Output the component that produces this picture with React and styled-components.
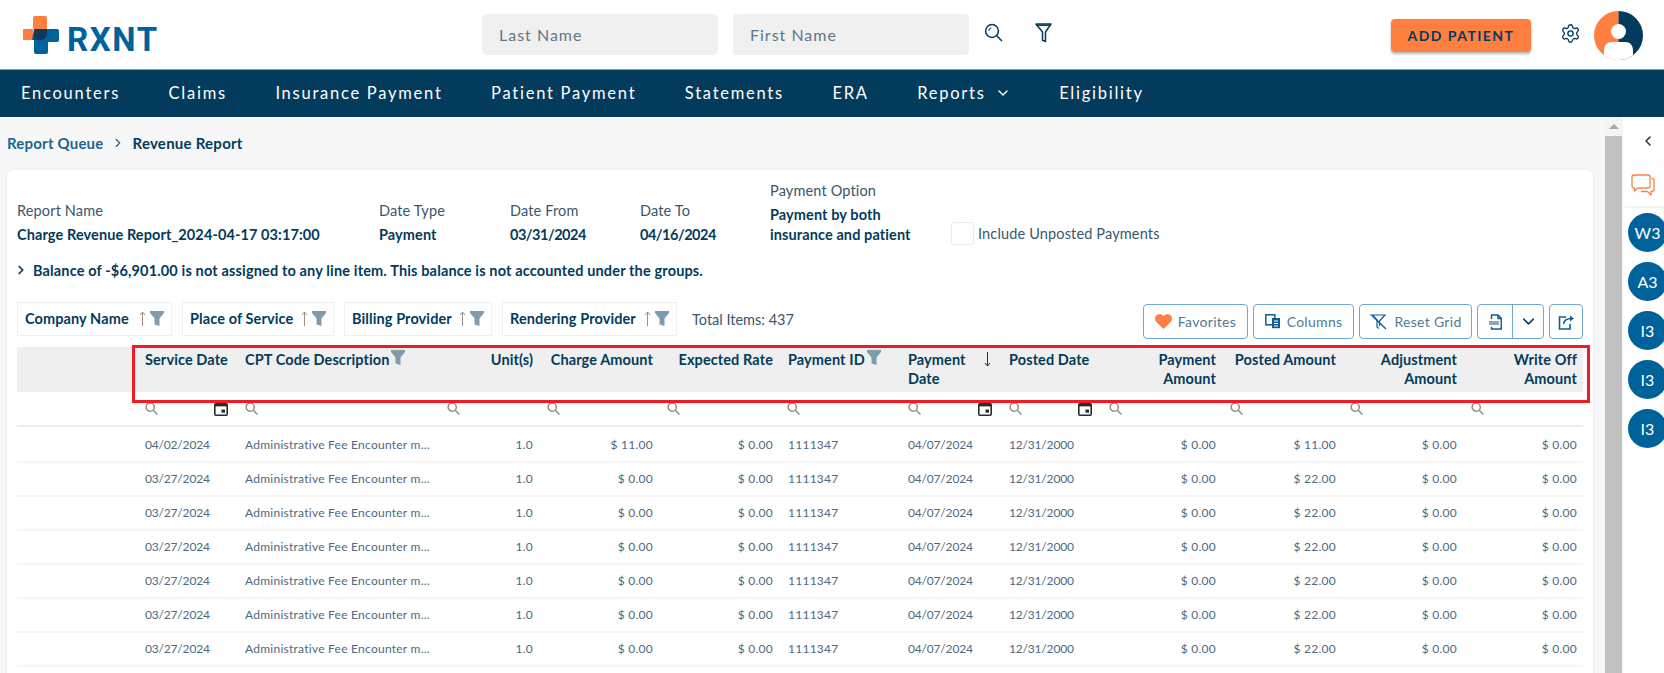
import React from "react"
import styled, { createGlobalStyle } from "styled-components"
import { ChevronDown, ChevronLeft, ChevronRight, Settings } from "lucide-react"

const navy = "#033b5c"
const blue = "#00629b"
const orange = "#ff7f41"
const slate = "#7f9bae"

const GlobalStyle = createGlobalStyle`
  html, body {
    margin: 0;
    height: 100%;
    overflow: hidden;
    background: #fff;
  }
  body {
    font-family: "Lato", "Open Sans", sans-serif;
    color: ${navy};
  }
  * { box-sizing: border-box; }
`

const Page = styled.div`
  width: 1664px;
  height: 673px;
  display: flex;
  flex-direction: column;
  overflow: hidden;
`

/* top bar */
const Header = styled.header`
  height: 69px;
  flex: none;
  display: flex;
  align-items: center;
  padding-left: 23px;
  background: #fff;
`
const Logo = styled.div`
  width: 459px;
  flex: none;
  display: flex;
  align-items: center;
  gap: 7px;
`
const LogoText = styled.span`
  font-family: "Roboto", sans-serif;
  font-size: 33px;
  line-height: 30px;
  font-weight: 700;
  letter-spacing: 1.6px;
  color: ${blue};
  margin-top: 11px;
`
const SearchInput = styled.input`
  width: 236px;
  height: 41px;
  margin-right: 15px;
  border: none;
  border-radius: 4px;
  background: #f0f0f0;
  padding: 0 17px;
  font-family: inherit;
  font-size: 16px;
  letter-spacing: 1px;
  color: ${navy};
  &::placeholder { color: #5d7789; opacity: 1; }
`
const HeaderIcon = styled.button`
  width: ${props => props.$w}px;
  height: 24px;
  margin-top: -4px;
  margin-left: ${props => props.$ml || 0}px;
  padding: 0;
  border: none;
  background: none;
  display: flex;
  align-items: center;
  justify-content: center;
  color: ${navy};
`
const AddPatient = styled.button`
  width: 140px;
  height: 33px;
  margin-left: 339px;
  margin-top: 2px;
  border: none;
  border-radius: 4px;
  background: ${orange};
  box-shadow: 0 2px 3px rgba(0, 0, 0, 0.3);
  font-family: inherit;
  font-size: 14px;
  font-weight: 700;
  letter-spacing: 1.45px;
  color: ${navy};
`
const Gear = styled.div`
  margin-left: 29px;
  margin-top: -3px;
  display: flex;
  color: ${navy};
`
const Avatar = styled.div`
  margin-left: 13px;
  margin-top: 1px;
  display: flex;
`

/* nav */
const Nav = styled.nav`
  height: 48px;
  flex: none;
  display: flex;
  align-items: center;
  gap: 48.5px;
  padding: 0 0 1px 21px;
  background: ${navy};
  border-top: 1px solid #7f9bae;
`
const NavItem = styled.a`
  display: flex;
  align-items: center;
  gap: 9px;
  font-size: 16.5px;
  letter-spacing: 1.75px;
  color: #fff;
`
const NavCaret = styled.span`
  display: flex;
`

const Body = styled.div`
  flex: 1;
  min-height: 0;
  display: flex;
`
const Main = styled.main`
  width: 1605px;
  flex: none;
  background: #f7f7f7;
  padding: 0 12px 0 7px;
`
const Crumbs = styled.div`
  height: 53px;
  display: flex;
  align-items: center;
  padding-bottom: 2px;
  font-size: 15px;
  letter-spacing: 0.25px;
  font-weight: 700;
`
const CrumbLink = styled.a`
  color: #1d6593;
  letter-spacing: 0.2px;
`
const CrumbSep = styled.span`
  display: flex;
  margin: 0 7px 0 8px;
  color: #1d6593;
`

const Card = styled.section`
  background: #fff;
  border-radius: 6px 6px 0 0;
  box-shadow: 0 0 4px rgba(0, 0, 0, 0.06);
  padding: 11px 10px 0;
  height: 520px;
`
const InfoRow = styled.div`
  display: flex;
  align-items: flex-end;
`
const Field = styled.div`
  width: ${props => props.$w}px;
  flex: none;
`
const FieldLabel = styled.div`
  font-size: 14.5px;
  line-height: 20px;
  letter-spacing: 0.15px;
  margin-bottom: 4px;
  color: #38576d;
`
const FieldValue = styled.div`
  font-size: 14.5px;
  line-height: 20px;
  letter-spacing: ${props => (props.$date ? "-0.5px" : "0.1px")};
  font-weight: 700;
`
const CheckWrap = styled.label`
  display: flex;
  align-items: center;
  gap: 4px;
  font-size: 14.5px;
  letter-spacing: 0.15px;
  color: #38576d;
`
const CheckBox = styled.span`
  width: 23px;
  height: 23px;
  border: 1px solid #ececec;
  border-radius: 3px;
  background: #fff;
`
const Balance = styled.div`
  margin-top: 15px;
  height: 20px;
  display: flex;
  align-items: center;
  gap: 5px;
  font-size: 14.5px;
  letter-spacing: 0.15px;
  font-weight: 700;
`

const ToolRow = styled.div`
  margin-top: 22px;
  height: 37px;
  display: flex;
  align-items: flex-start;
`
const Chip = styled.div`
  width: ${props => props.$w}px;
  height: 34px;
  flex: none;
  margin-right: 10px;
  padding: 0 7px 1px;
  display: flex;
  align-items: center;
  border: 1px solid #efefef;
  font-size: 14.5px;
  letter-spacing: 0.1px;
  font-weight: 700;
`
const ChipLabel = styled.span`
  flex: 1;
  white-space: nowrap;
`
const ChipGap = styled.span`
  width: 4px;
  flex: none;
`
const TotalItems = styled.div`
  margin-left: 5px;
  height: 34px;
  display: flex;
  align-items: center;
  font-size: 14.5px;
  color: #38576d;
`
const Actions = styled.div`
  margin-left: auto;
  margin-top: 2px;
  display: flex;
  gap: 5px;
`
const ActionButton = styled.button`
  width: ${props => props.$w}px;
  height: 35px;
  padding: 0;
  display: flex;
  align-items: center;
  justify-content: center;
  gap: 6px;
  background: #fff;
  border: 1px solid #72a8c9;
  border-radius: 4px;
  font-family: inherit;
  font-size: 14px;
  letter-spacing: 0.3px;
  color: #4f7a97;
`
const SplitButton = styled.div`
  width: 67px;
  height: 35px;
  display: grid;
  grid-template-columns: 34px 1fr;
  border: 1px solid #72a8c9;
  border-radius: 4px;
`
const SplitPart = styled.span`
  display: flex;
  align-items: center;
  justify-content: center;
  color: ${navy};
  & + & { border-left: 1px solid #72a8c9; }
`

/* grid */
const columns = "118px 100px 202px 100px 120px 120px 121px 101px 100px 121px 120px 121px 122px"

const Table = styled.div`
  position: relative;
  margin-top: 8px;
`
const RedBox = styled.div`
  position: absolute;
  left: 115px;
  top: -2px;
  width: 1458px;
  height: 58px;
  border: 3px solid #ee1c25;
  pointer-events: none;
`
const HeadRow = styled.div`
  display: grid;
  grid-template-columns: ${columns};
  height: 45px;
  background: #efefef;
`
const HeadCell = styled.div`
  display: flex;
  align-items: flex-start;
  justify-content: ${props => (props.$right ? "flex-end" : "flex-start")};
  gap: 2px;
  padding: 3px ${props => (props.$last ? 6 : 4)}px 0 ${props => props.$pl || 10}px;
  font-size: 14.5px;
  line-height: 19px;
  letter-spacing: 0.1px;
  font-weight: 700;
  text-align: ${props => (props.$right ? "right" : "left")};
  box-shadow: ${props => (props.$sorted ? "inset 0 0 0 1px #e4eef6" : "none")};
`
const SortArrow = styled.span`
  margin-left: auto;
  margin-right: 4px;
  margin-top: 2px;
  display: flex;
`
const FilterRow = styled.div`
  display: grid;
  grid-template-columns: ${columns};
  height: 35px;
  margin-bottom: 2px;
  border-bottom: 2px solid #eeeeee;
`
const FilterCell = styled.div`
  display: flex;
  justify-content: space-between;
  align-items: flex-start;
  padding: 10px 7px 0 10px;
`
const Row = styled.div`
  display: grid;
  grid-template-columns: ${columns};
  height: 34px;
  align-items: center;
  border-bottom: 2px solid #f5f5f5;
`
const Cell = styled.div`
  padding: 0 ${props => (props.$last ? 6 : 4)}px 2px ${props => props.$pl || 10}px;
  font-size: 12px;
  letter-spacing: ${props => (props.$date ? "-0.18px" : "0.25px")};
  color: #4c6a80;
  text-align: ${props => (props.$right ? "right" : "left")};
  white-space: nowrap;
`

/* right side */
const ScrollBar = styled.div`
  width: 18px;
  flex: none;
  display: flex;
  flex-direction: column;
  background: #f5f5f5;
`
const ScrollArrow = styled.div`
  height: 19px;
  display: flex;
  align-items: center;
  justify-content: center;
  padding-right: 1px;
  &::before {
    content: "";
    border-left: 5px solid transparent;
    border-right: 5px solid transparent;
    border-bottom: 5px solid #a8a8a8;
  }
`
const ScrollThumb = styled.div`
  flex: 1;
  width: 17px;
  background: #c1c1c1;
`
const Rail = styled.aside`
  flex: 1;
  min-width: 0;
  background: #fff;
  overflow: hidden;
`
const RailTop = styled.div`
  height: 91px;
  margin-left: 2px;
  padding: 16px 0 0 15px;
  border-bottom: 2px solid #f3f3f3;
  color: #0d3b30;
`
const RailChat = styled.div`
  margin: 22px 0 0 -9px;
  display: flex;
`
const RailList = styled.div`
  padding: 5px 0 0 5px;
  display: flex;
  flex-direction: column;
  gap: 10px;
`
const Bubble = styled.div`
  width: 39px;
  height: 39px;
  flex: none;
  border-radius: 50%;
  background: ${blue};
  display: flex;
  align-items: center;
  justify-content: center;
  font-size: 16px;
  color: #fff;
`

const LogoMark = () => (
  <svg width="37" height="38" viewBox="0 0 37 38">
    <path d="M10 2a2 2 0 0 1 2-2h10a2 2 0 0 1 2 2v11h-14v11h-9a1 1 0 0 1-1-1v-9a1 1 0 0 1 1-1h9z" fill={orange} />
    <path d="M11 13h23a2 2 0 0 1 2 2v9a2 2 0 0 1-2 2h-9v10a2 2 0 0 1-2 2h-10a2 2 0 0 1-2-2v-12h-2z" fill={blue} />
    <path d="M11 13h13v5a6 6 0 0 1-6 6h-7z" fill="#0f3a5c" />
  </svg>
)

const SearchGlass = ({ size = 20 }) => (
  <svg width={size} height={size} viewBox="0 0 20 20" fill="none" stroke={navy} strokeWidth="1.5">
    <circle cx="8" cy="8" r="6.4" />
    <path d="M12.7 12.7 18 18" />
    <path d="M4.8 7.6a3.4 3.4 0 0 1 2.4-2.8" strokeWidth="1.1" />
  </svg>
)

const FunnelOutline = () => (
  <svg width="17" height="20" viewBox="0 0 17 20" fill="none" stroke={navy} strokeWidth="1.5">
    <path d="M1 1h15l-5.5 8v9.5l-3-1.2V9z" strokeLinejoin="round" />
    <path d="M1 2.2h15" />
  </svg>
)

const FunnelSolid = () => (
  <svg width="14" height="15" viewBox="0 0 14 15" fill={slate} style={{ flex: "none" }}>
    <path d="M0 0h14v2L9.5 7.5V15l-5-1.6V7.5L0 2z" />
  </svg>
)

const ThinArrow = ({ down, color = "#9a8f86" }) => (
  <svg width="7" height="15" viewBox="0 0 7 15" fill="none" stroke={color} strokeWidth="1" style={{ flex: "none" }}>
    {down ? <path d="M3.5 0v14M1 11l2.5 3L6 11" /> : <path d="M3.5 15V1M1 4l2.5-3L6 4" />}
  </svg>
)

const MiniSearch = () => (
  <svg width="13" height="13" viewBox="0 0 12 12" fill="none" stroke="#8a8a8a" strokeWidth="1.3">
    <circle cx="4.8" cy="4.8" r="3.8" />
    <path d="M7.6 7.6 11.5 11.5" />
  </svg>
)

const MiniCalendar = () => (
  <svg width="14" height="13" viewBox="0 0 14 13" style={{ marginTop: 1 }}>
    <rect x="0.8" y="0.8" width="12.4" height="11.4" rx="1" fill="#fff" stroke="#2b2b2b" strokeWidth="1.6" />
    <rect x="1" y="1" width="12" height="2.4" fill="#2b2b2b" />
    <rect x="7.5" y="6.5" width="3.5" height="3.2" fill="#2b2b2b" />
  </svg>
)

const Heart = () => (
  <svg width="17" height="15" viewBox="0 0 17 15" fill={orange}>
    <path d="M8.5 15 1.4 8.1C-.5 6.2-.4 3 1.5 1.3 3.4-.4 6.4-.3 8.5 2c2.1-2.3 5.1-2.4 7-.7 1.9 1.7 2 4.9.1 6.8z" />
  </svg>
)

const ColumnsIcon = () => (
  <svg width="16" height="15" viewBox="0 0 16 15" fill="none" stroke="#0f5d8f" strokeWidth="1.5">
    <rect x="0.8" y="0.8" width="9" height="10" />
    <rect x="7" y="4" width="8" height="10.2" fill="#0f5d8f" stroke="none" />
    <path d="M9 7h4M9 9.5h4M9 12h4" stroke="#fff" strokeWidth="1" />
  </svg>
)

const ResetFunnel = () => (
  <svg width="19" height="16" viewBox="0 0 19 16" fill="none" stroke="#0f5d8f" strokeWidth="1.2">
    <path d="M1 1h15l-5.5 6v5" />
    <path d="M3.5 1 8 6v7l2 1.5" />
    <path d="M3 1.5 17 15" strokeWidth="1.4" />
  </svg>
)

const PdfIcon = () => (
  <svg width="13" height="16" viewBox="0 0 13 16" fill="none" stroke="#0f5d8f" strokeWidth="1.5">
    <path d="M2.5 5V1h6.5l3.3 3.3V15H2.5v-2" />
    <path d="M9 1v3.5h3.3" />
    <rect x="0" y="7" width="10" height="4" fill="#8fa6b6" stroke="none" />
  </svg>
)

const ExportIcon = () => (
  <svg width="17" height="16" viewBox="0 0 17 16" fill="none" stroke="#0f5d8f" strokeWidth="1.6">
    <path d="M8 3H1.5v12h10.5v-5" />
    <path d="M5.5 10c.5-3.5 3-5.5 8-5.5" />
    <path d="m12 1.5 4 3-4 3" fill="#0f5d8f" stroke="none" />
  </svg>
)

const ChatIcon = () => (
  <svg width="24" height="23" viewBox="0 0 24 23" fill="none" stroke={orange} strokeWidth="1.3" strokeLinejoin="round">
    <path d="M3 1h14a2 2 0 0 1 2 2v9a2 2 0 0 1-2 2H7l-3.5 3v-3H3a2 2 0 0 1-2-2V3a2 2 0 0 1 2-2z" />
    <path d="M20.5 4.5h.5a2 2 0 0 1 2 2v9a2 2 0 0 1-2 2h-1v3.5l-3.5-3.5h-6.5" />
  </svg>
)

const AvatarPic = () => (
  <svg width="49" height="49" viewBox="0 0 49 49">
    <defs>
      <clipPath id="avatar-clip">
        <circle cx="24.5" cy="24.5" r="24.5" />
      </clipPath>
    </defs>
    <g clipPath="url(#avatar-clip)">
      <rect width="24.5" height="49" fill={orange} />
      <rect x="24.5" width="24.5" height="49" fill={navy} />
      <circle cx="24.5" cy="20.5" r="7.5" fill="#fff" />
      <path d="M10 40c0-6 3-9 8-9h13c5 0 8 3 8 9v9H10z" fill="#fff" />
    </g>
  </svg>
)

const navItems = ["Encounters", "Claims", "Insurance Payment", "Patient Payment", "Statements", "ERA"]
const chips = [
  ["Company Name", 155],
  ["Place of Service", 152],
  ["Billing Provider", 148],
  ["Rendering Provider", 175],
]
const headers = [
  { label: "Service Date" },
  { label: "CPT Code Description", filter: true },
  { label: "Unit(s)", right: true },
  { label: "Charge Amount", right: true },
  { label: "Expected Rate", right: true },
  { label: "Payment ID", filter: true, pl: 11 },
  { label: "Payment Date", sorted: true },
  { label: "Posted Date" },
  { label: "Payment Amount", right: true, pl: 40 },
  { label: "Posted Amount", right: true },
  { label: "Adjustment Amount", right: true, pl: 40 },
  { label: "Write Off Amount", right: true, pl: 40, last: true },
]
const hasCalendar = [true, false, false, false, false, false, true, true, false, false, false, false]

const rows = [
  ["04/02/2024", "$ 11.00", "$ 11.00"],
  ...Array.from({ length: 6 }, () => ["03/27/2024", "$ 0.00", "$ 22.00"]),
]

export default function App() {
  return (
    <Page>
      <GlobalStyle />
      <Header>
        <Logo>
          <LogoMark />
          <LogoText>RXNT</LogoText>
        </Logo>
        <SearchInput placeholder="Last Name" />
        <SearchInput placeholder="First Name" />
        <HeaderIcon $w={20}><SearchGlass /></HeaderIcon>
        <HeaderIcon $w={17} $ml={31}><FunnelOutline /></HeaderIcon>
        <AddPatient>ADD PATIENT</AddPatient>
        <Gear><Settings size={21} strokeWidth={1.5} /></Gear>
        <Avatar><AvatarPic /></Avatar>
      </Header>
      <Nav>
        {navItems.map(item => <NavItem key={item}>{item}</NavItem>)}
        <NavItem>Reports<NavCaret><ChevronDown size={16} strokeWidth={2} /></NavCaret></NavItem>
        <NavItem>Eligibility</NavItem>
      </Nav>
      <Body>
        <Main>
          <Crumbs>
            <CrumbLink>Report Queue</CrumbLink>
            <CrumbSep><ChevronRight size={14} strokeWidth={2} /></CrumbSep>
            <span>Revenue Report</span>
          </Crumbs>
          <Card>
            <InfoRow>
              <Field $w={362}>
                <FieldLabel>Report Name</FieldLabel>
                <FieldValue>Charge Revenue Report_2024-04-17 03:17:00</FieldValue>
              </Field>
              <Field $w={131}>
                <FieldLabel>Date Type</FieldLabel>
                <FieldValue>Payment</FieldValue>
              </Field>
              <Field $w={130}>
                <FieldLabel>Date From</FieldLabel>
                <FieldValue $date>03/31/2024</FieldValue>
              </Field>
              <Field $w={130}>
                <FieldLabel>Date To</FieldLabel>
                <FieldValue $date>04/16/2024</FieldValue>
              </Field>
              <Field $w={181}>
                <FieldLabel>Payment Option</FieldLabel>
                <FieldValue>Payment by both<br />insurance and patient</FieldValue>
              </Field>
              <CheckWrap>
                <CheckBox />
                Include Unposted Payments
              </CheckWrap>
            </InfoRow>
            <Balance>
              <ChevronRight size={14} strokeWidth={3} style={{ marginLeft: -3 }} />
              Balance of -$6,901.00 is not assigned to any line item. This balance is not accounted under the groups.
            </Balance>
            <ToolRow>
              {chips.map(([label, w]) => (
                <Chip key={label} $w={w}>
                  <ChipLabel>{label}</ChipLabel>
                  <ThinArrow />
                  <ChipGap />
                  <FunnelSolid />
                </Chip>
              ))}
              <TotalItems>Total Items: 437</TotalItems>
              <Actions>
                <ActionButton $w={105}><Heart />Favorites</ActionButton>
                <ActionButton $w={101}><ColumnsIcon />Columns</ActionButton>
                <ActionButton $w={113}><ResetFunnel />Reset Grid</ActionButton>
                <SplitButton>
                  <SplitPart><PdfIcon /></SplitPart>
                  <SplitPart><ChevronDown size={19} strokeWidth={1.8} /></SplitPart>
                </SplitButton>
                <ActionButton $w={34}><ExportIcon /></ActionButton>
              </Actions>
            </ToolRow>
            <Table>
              <HeadRow>
                <HeadCell />
                {headers.map(h => (
                  <HeadCell key={h.label} $right={h.right} $pl={h.pl} $last={h.last} $sorted={h.sorted}>
                    <span>{h.label}</span>
                    {h.filter && <FunnelSolid />}
                    {h.sorted && <SortArrow><ThinArrow down color={navy} /></SortArrow>}
                  </HeadCell>
                ))}
              </HeadRow>
              <FilterRow>
                <FilterCell />
                {hasCalendar.map((cal, i) => (
                  <FilterCell key={i}>
                    <MiniSearch />
                    {cal && <MiniCalendar />}
                  </FilterCell>
                ))}
              </FilterRow>
              {rows.map(([date, charge, posted], i) => (
                <Row key={i}>
                  <Cell />
                  <Cell $date>{date}</Cell>
                  <Cell>Administrative Fee Encounter m...</Cell>
                  <Cell $right>1.0</Cell>
                  <Cell $right>{charge}</Cell>
                  <Cell $right>$ 0.00</Cell>
                  <Cell $pl={11}>1111347</Cell>
                  <Cell $date>04/07/2024</Cell>
                  <Cell $date>12/31/2000</Cell>
                  <Cell $right>$ 0.00</Cell>
                  <Cell $right>{posted}</Cell>
                  <Cell $right>$ 0.00</Cell>
                  <Cell $right $last>$ 0.00</Cell>
                </Row>
              ))}
              <RedBox />
            </Table>
          </Card>
        </Main>
        <ScrollBar>
          <ScrollArrow />
          <ScrollThumb />
        </ScrollBar>
        <Rail>
          <RailTop>
            <ChevronLeft size={16} strokeWidth={2.2} />
            <RailChat><ChatIcon /></RailChat>
          </RailTop>
          <RailList>
            {["W3", "A3", "I3", "I3", "I3"].map((name, i) => <Bubble key={i}>{name}</Bubble>)}
          </RailList>
        </Rail>
      </Body>
    </Page>
  )
}
